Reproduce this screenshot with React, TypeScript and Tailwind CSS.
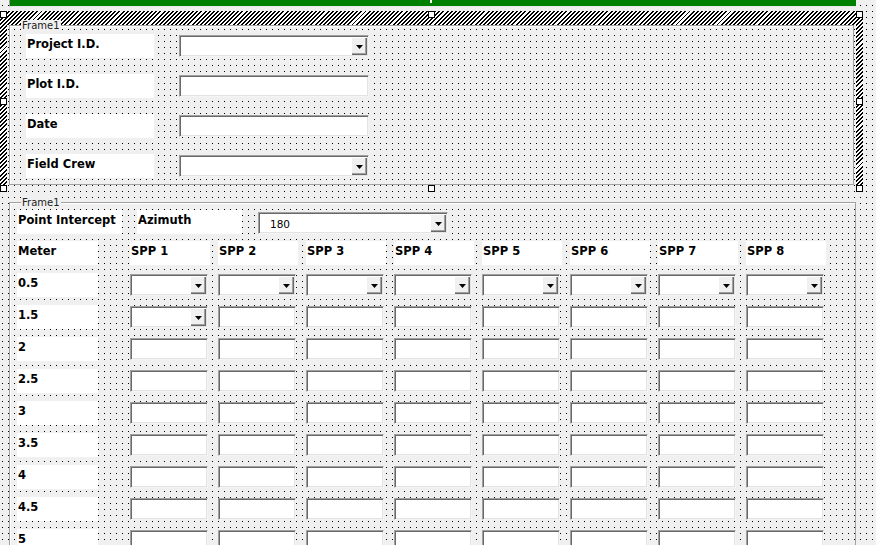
import type { ReactNode } from 'react';

// designer grid: one black pixel every 6px
const DOTS =
  'bg-[#f0f0f0] bg-[linear-gradient(#f0f0f0_5px,transparent_5px),linear-gradient(90deg,#000_1px,transparent_1px)] bg-[size:6px_6px] bg-fixed bg-[position:2px_0px]';

const ROWS = ['0.5', '1.5', '2', '2.5', '3', '3.5', '4', '4.5', '5'];
const SPP = [1, 2, 3, 4, 5, 6, 7, 8];

/**
 * Sunken VBA style text box, with an optional dropdown button
 */
function Box({ w, combo, value }: { w: string; combo?: boolean; value?: string }) {
  return (
    <div
      className={`${w} h-[22px] bg-white border border-t-[#a0a0a0] border-l-[#a0a0a0] border-r-[#f4f4f4] border-b-[#f4f4f4] shadow-[inset_1px_1px_0_#696969,inset_-1px_-1px_0_#e3e3e3] flex items-stretch p-[1px]`}
    >
      <div className="flex-1 pl-[10px] pt-[4px] text-[10.5px] leading-[12px] text-black font-['DejaVu_Sans',sans-serif]">
        {value}
      </div>
      {combo && (
        <div className="w-[16px] bg-[#f0f0f0] shadow-[inset_1px_1px_0_#fff,inset_-1px_-1px_0_#696969,inset_-2px_-2px_0_#a0a0a0] flex items-center justify-center pt-[2px]">
          <svg width="7" height="4" viewBox="0 0 7 4">
            <polygon points="0,0 7,0 3.5,4" fill="#000" />
          </svg>
        </div>
      )}
    </div>
  );
}

function Label({ w, children }: { w: string; children?: ReactNode }) {
  return (
    <div
      className={`${w} h-[24px] bg-white pl-[1px] pt-[4px] text-[11.5px] leading-[13px] font-bold text-black font-['DejaVu_Sans',sans-serif] whitespace-nowrap`}
    >
      {children}
    </div>
  );
}

function Frame({ className, children }: { className: string; children: ReactNode }) {
  return (
    <div className={`relative shrink-0 border border-[#a0a0a0] shadow-[inset_1px_1px_0_#fff] ${className}`}>
      <span className="absolute -top-[6px] left-[11px] px-[1px] bg-[#f0f0f0] text-[10px] leading-[12px] text-[#222] font-['DejaVu_Sans',sans-serif]">
        Frame1
      </span>
      {children}
    </div>
  );
}

function Handle({ className }: { className: string }) {
  return <div className={`absolute w-[7px] h-[7px] bg-white border border-black ${className}`} />;
}

const HEADER_FIELDS = [
  { label: 'Project I.D.', combo: true },
  { label: 'Plot I.D.', combo: false },
  { label: 'Date', combo: false },
  { label: 'Field Crew', combo: true },
];

export default function App() {
  return (
    <div className={`w-[876px] h-[545px] overflow-hidden flex flex-col ${DOTS}`}>
      {/* Title label, mostly scrolled out of view */}
      <div className="shrink-0 ml-[9px] w-[847px] h-[7px] bg-[#008000] border-l border-b border-l-[#a0a0a0] border-b-[#e8e8e8] flex justify-center">
        <div className="-ml-[4px] w-[2px] h-[3px] bg-white" />
      </div>

      {/* Selected frame with hatched border */}
      <div className="shrink-0 relative mt-[4px] w-[863px] h-[181px] p-[7px] bg-[repeating-linear-gradient(135deg,#000_0_1.4px,#fff_1.4px_2.9px)]">
        <div className={`h-full ${DOTS}`}>
          <Frame className="ml-[2px] mt-[7px] w-[845px] h-[160px] pt-[8px] pl-[16px]">
            <div className="flex flex-col gap-[16px]">
              {HEADER_FIELDS.map((f) => (
                <div key={f.label} className="flex items-start">
                  <Label w="w-[128px]">{f.label}</Label>
                  <div className="ml-[25px] mt-[1px]">
                    <Box w="w-[190px]" combo={f.combo} />
                  </div>
                </div>
              ))}
            </div>
          </Frame>
        </div>
        <Handle className="left-0 top-0" />
        <Handle className="left-[428px] top-0" />
        <Handle className="left-[856px] top-0" />
        <Handle className="left-0 top-[87px]" />
        <Handle className="left-[856px] top-[87px]" />
        <Handle className="left-0 top-[174px]" />
        <Handle className="left-[428px] top-[174px]" />
        <Handle className="left-[856px] top-[174px]" />
      </div>

      {/* Point intercept frame */}
      <Frame className="ml-[9px] mt-[10px] w-[847px] h-[400px] pl-[7px] pt-[7px]">
        <div className="flex items-start">
          <Label w="w-[105px]">Point Intercept</Label>
          <div className="ml-[15px]">
            <Label w="w-[105px]">Azimuth</Label>
          </div>
          <div className="ml-[16px] mt-[2px]">
            <Box w="w-[190px]" combo value="180" />
          </div>
        </div>

        <div className="mt-[7px] flex flex-col gap-[8px]">
          <div className="flex items-start">
            <Label w="w-[81px]">Meter</Label>
            <div className="ml-[32px] flex gap-[8px]">
              {SPP.map((n) => (
                <Label key={n} w="w-[80px]">
                  SPP {n}
                </Label>
              ))}
            </div>
          </div>
          {ROWS.map((r, ri) => (
            <div key={r} className="flex items-start">
              <Label w="w-[81px]">{r}</Label>
              <div className="ml-[32px] mt-[1px] flex gap-[10px]">
                {SPP.map((n, ci) => (
                  <Box key={n} w="w-[78px]" combo={ri === 0 || (ri === 1 && ci === 0)} />
                ))}
              </div>
            </div>
          ))}
        </div>
      </Frame>
    </div>
  );
}
